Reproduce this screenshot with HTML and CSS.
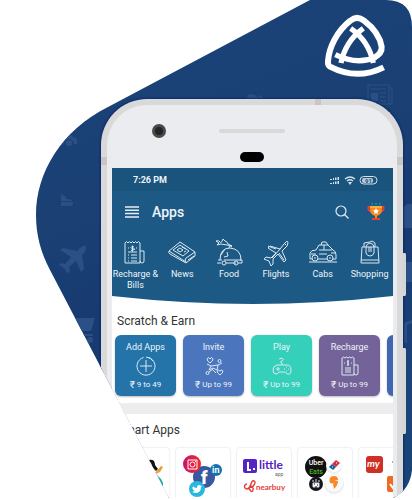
FILE: index.html
```
<!DOCTYPE html>
<html lang="en">
<head>
<meta charset="utf-8">
<meta name="viewport" content="width=device-width, initial-scale=1">
<title>Apps</title>
<link rel="stylesheet" href="styles.css">
</head>
<body>
<main class="hero">
  <svg class="backdrop" viewBox="0 0 412 498" preserveAspectRatio="xMaxYMin slice" aria-hidden="true">
    <defs>
      <linearGradient id="navy" x1="0" y1="0" x2="0.3" y2="1">
        <stop offset="0" stop-color="#1b4478"/><stop offset=".45" stop-color="#1a4074"/><stop offset=".7" stop-color="#173a70"/><stop offset="1" stop-color="#1a4478"/>
      </linearGradient>
    </defs>
    <rect width="412" height="498" fill="url(#navy)"/>
    <g fill="#2a5085">
      <path d="M60 143l3-9 6-1 4 4 4 2v5h-3a5 5 0 0 0-10 0h-4z"/>
      <circle cx="69" cy="143" r="3"/>
      <path d="M61 194l5 3 1 4h-6zM67 199l5 1v1h-11v-1zM61 202h12v2l-2 2H61z"/>
      <path transform="translate(59 245)" d="M27 1c-3-1-6 2-9 5L4 3 1 5l11 7-6 7-5-1-1 2 5 3 3 5 3-1-1-5 7-6 5 11 3-3-2-14c3-3 5-6 4-9z"/>
      <path d="M75 318h20l-4 13H80zM83 334h10v2H84z"/><circle cx="90" cy="340" r="3"/>
      <path d="M246 99l3-5 6 1 5 4zM259 95l8 5h-5l-4-4z"/>
      <path d="M403 207q5-4 9-3v24h-9zM405 262h7v20h-7zM404 323l8-3v3l-5 2v18h-3z"/>
    </g>
    <path d="M368 85h21v19h-21zM389 88h3v16h-3M371 89h15M380 93h6M380 97h6M380 101h6" fill="none" stroke="#2a5085"/>
    <path d="M371 93h7v8h-7z" fill="#2a5085"/>
    <g transform="translate(290 0) scale(.3333)" fill="none" stroke="#fff" stroke-linejoin="round">
      <path stroke-width="18" d="M281 202Q201 242 120 200 113 196 114 184C117 140 142 93 181 62Q201 45 222 62C251 84 270 110 275 140 277 158 266 167 248 175"/>
      <path stroke-width="16" d="M220 85C185 110 162 145 153 189M182 85C218 110 241 145 250 189M136 164Q200 196 258 172"/>
    </g>
  </svg>

  <article class="phone">
    <svg class="bezel" viewBox="0 0 281 63" aria-hidden="true">
      <circle cx="47" cy="26" r="7" fill="#494949"/><circle cx="47" cy="26" r="4" fill="#242424"/>
      <rect x="107" y="24" width="66" height="4" rx="2" fill="#d9d9d9"/>
      <rect x="128" y="47" width="24" height="10" rx="5" fill="#000"/>
      <path fill="#cdc4c4" d="M-11 52h6v8h-6zM203-6h6v6h-6zM285 52h6v8h-6z"/>
      <path fill="#d5d6d9" d="M290 148h3q1 0 1 2v39q0 2-1 2h-3zM290 243h3q1 0 1 2v82q0 2-1 2h-3z"/>
    </svg>

    <div class="screen">
      <div class="top">
        <div class="status">
          <span>7:26 PM</span>
          <svg width="50" height="12" viewBox="0 0 50 12" fill="none" stroke="#d5e1ec" aria-hidden="true">
            <path d="M2 5h2v1H2zM5 4h1v2H5zM7 3.500h1.500V6H7zM9.500 3H11v3H9.500zM2 9h2v1H2zM5 8h1v2H5zM7 7.500h1.500V10H7zM9.500 7H11v3H9.500z" fill="#d5e1ec" stroke="none"/>
            <path d="M17 5q5-4 10 0M19 7q3-2.500 6 0" stroke-width="1.400"/><path d="M20 8h4l-2 3z" fill="#d5e1ec" stroke="none"/>
            <rect x="32" y="2.500" width="17" height="7.500" rx="3.700"/><rect x="34" y="4" width="11" height="5" rx="2" fill="#b8cad9" stroke="none"/>
            <text x="37" y="9" class="charge">91</text>
          </svg>
        </div>
        <header class="bar">
          <button type="button" class="icon-button" aria-label="Menu"><svg width="14" height="12" viewBox="0 0 14 12"><path d="M0 1h14M0 4.300h14M0 7.600h14M0 10.900h14" stroke="#e6eef5" stroke-width="1.500"/></svg></button>
          <h1>Apps</h1>
          <button type="button" class="icon-button" aria-label="Search"><svg width="14" height="14" viewBox="0 0 14 14" fill="none" stroke="#e2ebf3" stroke-width="1.200"><circle cx="6" cy="6" r="5"/><path d="M9.500 9.500l4 4"/></svg></button>
          <button type="button" class="icon-button prize" aria-label="Rewards"><svg width="18" height="18" viewBox="0 0 18 18">
            <path d="M4 1h2M8 1h2M12 1h2" stroke="#1b8a9a" stroke-width="1.500"/>
            <path d="M4 4H1.500q-1 4 4 5M14 4h2.500q1 4-4 5" fill="none" stroke="#e9402f" stroke-width="2"/>
            <path d="M3 3h12v4q0 4-5 6v2h3v2H5v-2h3v-2Q3 11 3 7z" fill="#f68b1f"/><path d="M5 15h8v2H5z" fill="#e9402f"/>
            <path d="M3 3h12v2H3z" fill="#fbb03b"/><path d="M9 5l1 2 2 .3-1.500 1.500.4 2.200L9 10l-1.900 1 .4-2.200L6 7.300 8 7z" fill="#fff"/></svg></button>
        </header>
        <nav class="services" aria-label="Services">
          <a href="#recharge"><svg viewBox="0 0 28 28"><path d="M4 5l1.500-1.500L7 5l1.500-1.500L10 5l1.500-1.500L13 5l1.500-1.500L16 5l1.500-1.500L19 5v20H4zM19 13h4v10q0 2-2 2t-2-2M7 17h1M10 17h6M7 20h1M10 20h6M7 23h1M10 23h6M7 14h9M13 9q-3-1-3 .500t3 1.500-3 1.500M11.500 7.500v6M7 10h1M15 10h1"/></svg>Recharge &amp; Bills</a>
          <a href="#news"><svg viewBox="0 0 28 28"><path d="M1 13L12 4l15 10v4l-9 7L2 16q-2-1-1-3l17 11M27 14l-9 6q-2 2 0 4M20 22l6-4M5 12l7-5 9 6-6 5zM9 12l3-2 3 2-3 2zM14 9l4 2M16 14l2-1"/></svg>News</a>
          <a href="#food"><svg viewBox="0 0 28 28"><path d="M5 22q0-12 10-12 11 1 11 12H9M3 22h4M6 17l4-6M2 25h4M11 25h10M25 22h2v3h-4M7 25a2 2 0 1 0 4 0 2 2 0 1 0-4 0M19 25a2 2 0 1 0 4 0 2 2 0 1 0-4 0M9 19l4-1-1-4M14 10q0-3 3-1M1 3q3-1 4 1t3-3l2 2q2 0 3 3l4 2-5-1-6-1-4 1 2-2z"/></svg>Food</a>
          <a href="#flights"><svg viewBox="0 0 28 28"><path d="M25 3q2 1 0 5l-5 5 4 9-2 2-6-8-5 5v5l-2 2-2-5-5-2 2-2 5 1 5-5-8-5 2-2 10 3 4-5q3-3 3-3zM10 20l9-10M17 15l5 7M6 8l8 3M22 5l2 2"/></svg>Flights</a>
          <a href="#cabs"><svg viewBox="0 0 28 28"><path d="M3 21H1v-6q1-3 6-3l3-5h9l5 5q3 1 3 5v4h-3M9 21h9M10 12h13M15 7v5M12 7l1-3h4l2 3M0 24h28M2 16h5M22 15h4M10 16h8M3 20a3 3 0 1 0 6 0 3 3 0 1 0-6 0M18 20a3 3 0 1 0 6 0 3 3 0 1 0-6 0M5 20h2M20 20h2"/></svg>Cabs</a>
          <a href="#shopping"><svg viewBox="0 0 28 28"><path d="M6 9h16l1 16H5zM10 15V9q0-3 4-4 4 1 4 4v6q-1 3-4 3t-4-3M13 9v5M15 9v5M8 9V5l6-1 2-1 3 2v4M5 22h18"/></svg>Shopping</a>
        </nav>
      </div>
      <svg class="curve" viewBox="0 0 281 9" preserveAspectRatio="none" aria-hidden="true"><path d="M0 0H281Q210 8 141 8T0 0z"/></svg>

      <section class="earn">
        <h2>Scratch &amp; Earn</h2>
        <div class="row">
          <a class="offer add" href="#add">Add Apps<svg viewBox="0 0 20 20"><path d="M7.500 1.500a9 9 0 1 0 5 0M10 1a9 9 0 0 1 7 4M10 4v12M4 10h12"/></svg><span><b>₹</b>9 to 49</span></a>
          <a class="offer invite" href="#invite">Invite<svg viewBox="0 0 20 20"><path d="M3 3q2-3 3 0 2-3 3 0 0 2-3 4-3-2-3-4M3 8l4 2 7-1 4-2M7 10l-2 4 4-2 4 2 1-5M14 5a1.500 1.500 0 1 0 3 0 1.500 1.500 0 1 0-3 0M2 17a1.500 1.500 0 1 0 3 0 1.500 1.500 0 1 0-3 0M5 16l4-3M13 15q1-2 3 0 2-2 3 0 0 2-3 4-3-2-3-4M8 13l4 4"/></svg><span><b>₹</b>Up to 99</span></a>
          <a class="offer play" href="#play">Play<svg viewBox="0 0 20 20"><path d="M5 9h10q4 0 4 5t-3 4q-2 0-3-2H7q-1 2-3 2-3 0-3-4t4-5M10 9V7q-3-1 0-2t0-3L7 3M4 13h4M6 11v4M12 13h1M16 13h1M14 11h1M14 15h1"/></svg><span><b>₹</b>Up to 99</span></a>
          <a class="offer bill" href="#bills">Recharge<svg viewBox="0 0 20 20"><path d="M2 2l1.500-1L5 2l1.500-1L8 2l1.500-1L11 2l1.500-1L14 2v17H2zM14 9h4v8q0 2-2 2t-2-2M5 12h6M5 14h6M5 16h6M9 5q-3 0-1 2t-1 2M8 4v6M4 7h1M11 7h1"/></svg><span><b>₹</b>Up to 99</span></a>
          <a class="offer more" href="#more" aria-label="More offers"></a>
        </div>
      </section>

      <section class="smart">
        <h2>Smart Apps</h2>
        <div class="row">
          <a class="tile" href="#shop" aria-label="Deals"><svg viewBox="0 0 54 50"><path d="M34 12q3-1 5 1 1 2 1 4l3 4-2 2-4-4-1-4-2-1z" fill="#111"/><path d="M40 25l6-7 2 1-3 5-4 2z" fill="#f29a2e"/><path d="M41 26l5 5 2 4v4l-5-6z" fill="#20a5a8"/></svg></a>
          <a class="tile" href="#social" aria-label="Social"><svg viewBox="0 0 54 50">
            <defs><linearGradient id="insta" x1="0" x2="1"><stop stop-color="#c9146b"/><stop offset="1" stop-color="#f02a2a"/></linearGradient></defs>
            <circle cx="28" cy="29" r="11" fill="#3a589e"/><circle cx="16" cy="16" r="9" fill="url(#insta)"/><circle cx="40" cy="22" r="6" fill="#1470b0"/><circle cx="21" cy="41" r="8" fill="#26b8df"/>
            <path d="M12 12h9v9h-9zM14 16.500a2.300 2.300 0 1 0 5 0 2.300 2.300 0 1 0-5 0M19 13.500h1" fill="none" stroke="#fff"/>
            <text x="25" y="36" class="fb">f</text><text x="36" y="25" class="in">in</text>
            <path d="M17 38q1 2 4 2 0-3 2-3l3 1-1 1q0 6-6 6l-3-1 3-1-2-1v-1l-1-1 1-1z" fill="#fff"/></svg></a>
          <a class="tile" href="#local"><svg viewBox="0 0 54 50"><rect x="6" y="11" width="14" height="14" rx="2" fill="#5624c4"/><path d="M11 14v8h3M16 21h2" fill="none" stroke="#fff" stroke-width="2"/><text x="22" y="21" class="little">little</text><text x="38" y="28" class="app">app</text>
            <path d="M10 36a2.500 2.500 0 1 0 0 5q3-1 4-5t3-3 0 4-3 1q-3 1-1 4t3 0-3-3" fill="none" stroke="#e73a3a" stroke-width="1.400"/><text x="19" y="42" class="near">nearbuy</text></svg></a>
          <a class="tile" href="#eat"><svg viewBox="0 0 54 50"><circle cx="18" cy="19" r="11" fill="#111"/><text x="18" y="17" class="uber">Uber</text><text x="18" y="26" class="eats">Eats</text>
            <circle cx="36" cy="18" r="8" fill="#eee"/><circle cx="36" cy="17" r="7" fill="#fff"/><path d="M31 19l3-3 4 3-3 3z" fill="#126098"/><path d="M34 16l4-4 4 3-4 4z" fill="#d82e43"/><path d="M34 19h1M38 15h1" stroke="#fff"/>
            <circle cx="18" cy="36" r="7" fill="#15151c"/><path d="M15 35h6v4h-6zM15 32v2M18 31v3M21 32v2" fill="#fff" stroke="#ddd"/><path d="M16 36h1M19 37h1M17 39h2" stroke="#15151c"/>
            <circle cx="36" cy="36" r="10" fill="#ececec"/><circle cx="36" cy="35" r="9" fill="#fafafa"/><path d="M32 35q-2-7 4-7 4 0 4 4h-4l4 1q0 4-4 8l-1-5h2z" fill="#f78826"/></svg></a>
          <a class="tile" href="#travel"><svg viewBox="0 0 54 50"><rect x="7" y="8" width="17" height="17" rx="3" fill="#cf2f25"/><text x="8" y="19" class="my">my</text><path d="M33 14h1" stroke="#71bce8" stroke-width="2"/><rect x="28" y="28" width="16" height="16" rx="2" fill="#f06a25"/><path d="M31 36l3 4 6-8" fill="none" stroke="#fff" stroke-width="2"/></svg></a>
        </div>
      </section>
    </div>
  </article>
</main>
</body>
</html>
```
FILE: styles.css
```
* {
  box-sizing: border-box;
}

body {
  margin: 0;
  background: #fff;
  color: #333;
  font-family: Roboto, "Noto Sans", sans-serif;
}

a {
  color: inherit;
  text-decoration: none;
}

h1,
h2 {
  margin: 0;
}

svg {
  display: block;
}

.hero {
  position: relative;
  padding: 99px 9px 0 101px;
  clip-path: path("M310 0H386Q412 0 412 27V470Q410 490 393 498H169L50 270C41 253 36 235 36 215C36 172 62 130 108 107Z");
}

.backdrop {
  position: absolute;
  inset: 0;
  width: 100%;
  height: 100%;
}

.phone {
  position: relative;
  padding: 0 4px 0 5px;
  border: 6px solid #d9d9d9;
  border-bottom: 0;
  border-radius: 46px 46px 0 0;
  background: #ebecf0;
  box-shadow: 0 0 2px 1px #0c2c6c;
}

.bezel {
  width: 100%;
  overflow: visible;
}

.screen {
  overflow: hidden;
  background: #fff;
}

.top {
  color: #eef4f9;
  background: #1c5a85;
}

.status {
  display: flex;
  align-items: center;
  justify-content: space-between;
  height: 23px;
  padding: 0 15px 0 21px;
  background: #1a537b;
  font-size: 9px;
  font-weight: 700;
}

.charge {
  fill: #1a537b;
  stroke: none;
  font-size: 6px;
}

.bar {
  display: flex;
  align-items: center;
  height: 42px;
  padding: 0 8px 0 13px;
}

.bar h1 {
  flex: 1;
  padding-left: 13px;
  font-size: 14px;
  font-weight: 500;
  line-height: 16px;
}

.icon-button {
  padding: 0;
  border: 0;
  background: none;
}

.prize {
  margin-left: 18px;
}

.services {
  display: grid;
  grid-template-columns: repeat(6, minmax(0, 1fr));
  height: 63px;
  padding-top: 5px;
  font-size: 9px;
  line-height: 11px;
  text-align: center;
}

.services a {
  display: flex;
  flex-direction: column;
  align-items: center;
}

.services svg {
  flex: none;
  width: 28px;
  height: 28px;
  margin-bottom: 3px;
  fill: none;
  stroke: #dce7f0;
}

.curve {
  width: 100%;
  height: 9px;
  margin-bottom: 9px;
  fill: #1c5a85;
}

h2 {
  padding-left: 5px;
  font-size: 12px;
  font-weight: 400;
  line-height: 14px;
}

.row {
  display: flex;
  gap: 7px;
  padding-left: 3px;
}

.earn {
  padding: 0 0 7px;
}

.earn .row {
  padding-top: 7px;
}

.offer {
  display: flex;
  flex: none;
  flex-direction: column;
  align-items: center;
  justify-content: space-between;
  width: 61px;
  height: 61px;
  padding: 7px 0 6px;
  border-radius: 6px;
  box-shadow: 0 1px 2px #0004;
  color: #edf3fa;
  font-size: 9px;
  line-height: 11px;
}

.offer svg {
  width: 20px;
  height: 20px;
  fill: none;
  stroke: #dbe8f4;
}

.offer span {
  display: flex;
  align-items: center;
  gap: 2px;
  font-size: 8px;
}

.offer b {
  font-size: 10px;
  font-weight: 400;
}

.add {
  background: #2473a9;
}

.invite {
  background: #4b76be;
}

.play {
  background: #35d0ba;
}

.bill {
  background: #736398;
}

.more {
  background: #4066b2;
}

.smart {
  padding-top: 9px;
  border-top: 11px solid #ededed;
}

.smart .row {
  padding-top: 11px;
}

.tile {
  flex: none;
  width: 54px;
  height: 50px;
  border-radius: 3px 3px 0 0;
  box-shadow: 0 0 2px #0003;
}

.tile svg {
  width: 54px;
  height: 50px;
}

.fb {
  fill: #fff;
  font-size: 18px;
  font-weight: 900;
}

.in {
  fill: #fff;
  font-size: 9px;
  font-weight: 700;
}

.little {
  fill: #5624c4;
  font: 700 12px Lato, sans-serif;
}

.app {
  fill: #666;
  font-size: 5px;
}

.near {
  fill: #e73a3a;
  font: 700 8px Lato, sans-serif;
}

.uber,
.eats {
  fill: #fff;
  font-size: 7px;
  font-weight: 500;
  text-anchor: middle;
}

.eats {
  fill: #4bb51e;
}

.my {
  fill: #fff;
  font: italic 700 10px Lato, sans-serif;
}
```
